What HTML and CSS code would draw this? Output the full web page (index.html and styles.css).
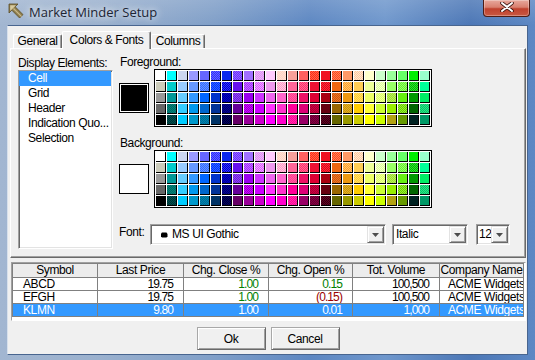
FILE: index.html
```html
<!DOCTYPE html>
<html>
<head>
<meta charset="utf-8">
<title>Market Minder Setup</title>
<link rel="stylesheet" href="styles.css">
</head>
<body>
<div class="window">
  <div class="titlebar">
    <svg class="app-icon" viewBox="0 0 16 16" width="16" height="16">
      <path d="M1 1 L10 1 L7.2 3.8 L15 11.6 L11.6 15 L3.8 7.2 L1 10 Z" fill="#8e7d4c" stroke="#5b4d27" stroke-width="0.8" stroke-linejoin="round"/>
      <path d="M2.2 2.2 L8 2.2 L2.2 8 Z" fill="#d8cba0"/>
      <path d="M5.5 5.5 L13.6 13.6" stroke="#c9b98a" stroke-width="1.2"/>
    </svg>
    <span class="title">Market Minder Setup</span>
    <div class="close-btn">
      <svg viewBox="0 0 14 10" width="14" height="10">
        <path d="M2 1 L12 9 M12 1 L2 9" stroke="#3a1410" stroke-width="3.6" stroke-linecap="round"/>
        <path d="M2 1 L12 9 M12 1 L2 9" stroke="#ffffff" stroke-width="2" stroke-linecap="round"/>
      </svg>
    </div>
  </div>
  <div class="client">
    <div class="tabs">
      <div class="tab tab-general">General</div>
      <div class="tab tab-colors active">Colors &amp; Fonts</div>
      <div class="tab tab-columns">Columns</div>
    </div>
    <div class="panel">
      <div class="elements">
        <div class="label">Display Elements:</div>
        <div class="listbox">
          <div class="item selected">Cell</div>
          <div class="item">Grid</div>
          <div class="item">Header</div>
          <div class="item">Indication Quo...</div>
          <div class="item">Selection</div>
        </div>
      </div>
      <div class="settings">
        <div class="label color-label">Foreground:</div>
        <div class="color-row">
          <div class="swatch swatch-black"></div>
          <div class="palette"></div>
        </div>
        <div class="label color-label bg-label">Background:</div>
        <div class="color-row">
          <div class="swatch swatch-white"></div>
          <div class="palette"></div>
        </div>
        <div class="font-row">
          <span class="font-label">Font:</span>
          <div class="combo combo-font">
            <span class="combo-text"><svg class="font-icon" viewBox="0 0 7 6" width="7" height="6"><path d="M1 0.5 H5.5 L6.5 2 V4.5 L5.5 5.5 H1 L0 4.5 V1.5 Z" fill="#000"/></svg>MS UI Gothic</span>
            <span class="drop"><svg viewBox="0 0 7 4" width="7" height="4"><path d="M0 0 H7 L3.5 4 Z" fill="#4d4d4d"/></svg></span>
          </div>
          <div class="combo combo-style">
            <span class="combo-text">Italic</span>
            <span class="drop"><svg viewBox="0 0 7 4" width="7" height="4"><path d="M0 0 H7 L3.5 4 Z" fill="#4d4d4d"/></svg></span>
          </div>
          <div class="combo combo-size">
            <span class="combo-text">12</span>
            <span class="drop"><svg viewBox="0 0 7 4" width="7" height="4"><path d="M0 0 H7 L3.5 4 Z" fill="#4d4d4d"/></svg></span>
          </div>
        </div>
      </div>
    </div>
    <div class="grid">
      <div class="datagrid">
        <div class="row head">
          <span>Symbol</span><span>Last Price</span><span>Chg. Close %</span><span>Chg. Open %</span><span>Tot. Volume</span><span>Company Name</span>
        </div>
        <div class="row">
          <span class="sym">ABCD</span><span class="num">19.75</span><span class="num up">1.00</span><span class="num up">0.15</span><span class="num">100,500</span><span class="co">ACME Widgets</span>
        </div>
        <div class="row">
          <span class="sym">EFGH</span><span class="num">19.75</span><span class="num up">1.00</span><span class="num down">(0.15)</span><span class="num">100,500</span><span class="co">ACME Widgets</span>
        </div>
        <div class="row selected">
          <span class="sym">KLMN</span><span class="num">9.80</span><span class="num">1.00</span><span class="num">0.01</span><span class="num">1,000</span><span class="co">ACME Widgets</span>
        </div>
      </div>
    </div>
    <div class="buttons">
      <button class="btn">Ok</button>
      <button class="btn">Cancel</button>
    </div>
  </div>
</div>
<script src="palette.js"></script>
</body>
</html>
```

FILE: styles.css
```css
* { box-sizing: border-box; }
html, body { margin: 0; padding: 0; }
body {
  width: 535px; height: 360px; overflow: hidden;
  font-family: "Liberation Sans", Arial, sans-serif;
  font-size: 12px; color: #000; letter-spacing: -0.4px;
  background: #5a86c4;
}
.window {
  width: 535px; height: 360px;
  display: flex; flex-direction: column;
  padding: 0 7px 5px 7px;
  background:
    linear-gradient(180deg, rgba(255,255,255,0.15) 0, rgba(255,255,255,0) 25px),
    linear-gradient(90deg, #a2b6d1 0%, #9bb1ce 18%, #809fc8 40%, #5d87c2 58%, #6f97cc 72%, #4c77b6 88%, #5d88c4 100%);
}
.titlebar { height: 25px; flex: none; display: flex; align-items: flex-start; }
.app-icon { flex: none; margin: 3px 0 0 1px; }
.title {
  margin: 3px 0 0 5px;
  font-family: "Open Sans", "Noto Sans", sans-serif; font-size: 13px; line-height: 18px;
  letter-spacing: 0; color: #1c2534;
  text-shadow: 0 0 6px rgba(255,255,255,0.9), 0 0 12px rgba(255,255,255,0.6);
}
.close-btn {
  margin-left: auto; margin-right: -2px;
  width: 47px; height: 17px; flex: none;
  border: 1px solid #4e1c15; border-top: none; border-radius: 0 0 4px 4px;
  background: linear-gradient(180deg, #e7a89d 0%, #d9806f 45%, #c0412e 55%, #c85842 100%);
  box-shadow: inset 0 0 0 1px rgba(255,255,255,0.3);
  display: flex; align-items: center; justify-content: center; padding-bottom: 2px;
}
.client {
  flex: 1; background: #f0f0f0;
  border: 1px solid #48658f; border-left-color: #d7e0ec;
  display: flex; flex-direction: column;
  padding: 5px 1px 0 2px;
}
.tabs { height: 17px; flex: none; display: flex; align-items: flex-end; padding-left: 3px; position: relative; z-index: 1; }
.tab {
  height: 14px; text-align: center; line-height: 13px;
  border: 1px solid; border-color: #fff #696969 transparent #fff; border-bottom: none;
  box-shadow: inset -1px 0 0 #a0a0a0;
  border-radius: 2px 2px 0 0;
  background: #f0f0f0;
}
.tab-general { width: 49px; }
.tab-colors { width: 89px; }
.tab-columns { width: 54px; }
.tab.active { height: 18px; margin-bottom: -1px; padding-top: 1px; line-height: 14px; }
.panel {
  height: 210px; flex: none;
  border: 1px solid; border-color: #fff #696969 #696969 #fff;
  box-shadow: inset -1px -1px 0 #a0a0a0;
  display: flex; padding: 7px 0 0 7px;
}
.elements { width: 95px; flex: none; display: flex; flex-direction: column; }
.label { line-height: 14px; white-space: nowrap; }
.listbox {
  height: 179px; background: #fff;
  border: 1px solid; border-color: #a0a0a0 #fff #fff #a0a0a0;
  box-shadow: inset 1px 1px 0 #696969, inset -1px -1px 0 #e3e3e3;
  padding-right: 1px;
}
.item { height: 15px; line-height: 15px; padding-left: 9px; white-space: nowrap; overflow: hidden; }
.item.selected { background: #3399ff; color: #fff; }
.settings { margin-left: 6px; display: flex; flex-direction: column; }
.color-label { line-height: 13px; padding-left: 1px; }
.bg-label { margin-top: 10px; }
.color-row { display: flex; align-items: center; }
.swatch { width: 30px; height: 30px; border: 1px solid #000; margin-right: 5px; box-shadow: inset 0 0 0 1px #fff; }
.swatch-black { background: #000; }
.swatch-white { background: #fff; }
.palette {
  border: 1px solid #000; background: #fff; padding: 1px;
  display: grid; grid-template-columns: repeat(25, 10px); grid-auto-rows: 10px; gap: 1px;
  width: 278px; height: 58px;
}
.cell {
  border-right: 1px solid #000; border-bottom: 1px solid #000;
  background: repeating-conic-gradient(var(--a) 0 25%, var(--b) 0 50%) 0 0 / 2px 2px;
}
.font-row { display: flex; align-items: flex-start; margin-top: 16px; }
.font-label { width: 31px; line-height: 13px; margin-top: 2px; }
.combo {
  height: 21px; display: flex; background: #fff;
  border: 1px solid; border-color: #a0a0a0 #fff #fff #a0a0a0;
  box-shadow: inset 1px 1px 0 #696969, inset -1px -1px 0 #e3e3e3;
  padding: 1px;
}
.combo-font { width: 236px; }
.combo-style { width: 76px; margin-left: 6px; }
.combo-size { width: 34px; margin-left: 8px; }
.combo-text { flex: 1; line-height: 17px; white-space: nowrap; overflow: hidden; display: flex; align-items: center; }
.combo-font .combo-text { padding-left: 9px; }
.combo-style .combo-text { padding-left: 2px; }
.combo-size .combo-text { padding-left: 1px; }
.font-icon { margin-right: 4px; margin-top: 1px; }
.drop {
  width: 17px; height: 17px; flex: none;
  background: #f0f0f0;
  border: 1px solid; border-color: #e3e3e3 #696969 #696969 #e3e3e3;
  box-shadow: inset 1px 1px 0 #fff, inset -1px -1px 0 #a0a0a0;
  display: flex; align-items: center; justify-content: center;
}
.grid {
  margin: 4px 0 0 1px; height: 59px; flex: none;
  border: 1px solid; border-color: #a0a0a0 #fff #fff #a0a0a0;
  background: #fff; overflow: hidden;
}
.datagrid { width: 512px; border-left: 1px solid #808080; border-top: 1px solid #808080; }
.row { display: grid; grid-template-columns: 85px 86px 85px 84px 87px 84px; }
.row > span {
  height: 13px; line-height: 12px; white-space: nowrap; overflow: hidden;
  border-right: 1px solid #808080; border-bottom: 1px solid #808080;
}
.row.head > span { height: 14px; line-height: 13px; text-align: center; background: #ececec; }
.sym { padding-left: 10px; }
.num { text-align: right; padding-right: 10px; letter-spacing: -0.9px; }
.co { padding-left: 8px; }
.up { color: #008000; }
.down { color: #990000; }
.row.selected > span { background: #3399ff; color: #fff; }
.buttons { display: flex; justify-content: center; gap: 5px; margin-top: 6px; }
.btn {
  width: 69px; height: 23px; padding: 0;
  font: inherit; letter-spacing: inherit; color: #000;
  background: #f0f0f0;
  border: 1px solid; border-color: #a8a8a8 #696969 #696969 #a8a8a8;
  box-shadow: inset 1px 1px 0 #fff, inset -1px -1px 0 #a0a0a0;
}
```

FILE: palette.js
```js
(function () {
  var rows = [
    "#ffffff #00ffff #ccd6f0 #9999ff #6666ff #2b2bff/#6666ff #0a28ee #6633ff/#9966ff #a070ff #cc99ff/#ffaaee #ffccff #ffcccc/#ffe8cc #f7a09a #ff6060 #ff2020/#ff7040 #f01020 #ff4422/#ff8855 #ff9966 #ffc8a0/#ffe8d0 #ffffcc #ccffcc #99ff99 #66ff66 #00ee00 #99ffcc",
    "#ccccbb #00cccc #99ccff #6699ff #3366ff/#6699ff #0033ff/#3366ff #0000cc/#3333ff #6611ee #9933ff/#cc66ff #cc66ff/#ff99ff #ee99ee #ff99cc/#ffccdd #ff6699 #ff3366/#ff6699 #ee1133 #dd0022/#ff3333 #ee6611 #ff9933/#ffcc66 #ffcc55 #eeff99 #ddff99/#f4ffcc #99ff66 #66ee33/#99ff66 #00bb00/#33dd33 #00ff99",
    "#999999 #009999 #66ccff #3399ff #0066ff #0033cc #000099/#0000cc #6633cc/#9933ff #9900ee #cc33ff #ee66ee #ff66cc #ff3399/#ff6699 #ee1166 #dd0033 #aa0011 #cc5511/#ee7722 #ee9911 #ffcc33/#ffdd66 #eeff66 #ddff66/#eeff99 #99dd33/#bbee55 #66ee11 #009900 #00ee66",
    "#666666 #006666/#008877 #33ccff #0099ee #0066cc #003399 #000066/#000099 #660099 #9900cc/#cc00ff #cc00ff #ff33ff #ff33cc #ff0099 #dd0077 #aa0033/#cc0044 #660011 #996600 #cc9900/#ddaa33 #ffcc00 #ffff33 #ccff33 #99ee00 #66cc00/#99ee33 #006600 #00cc66/#33dd88",
    "#000000 #003333/#005050 #00ccff #0099cc #006699/#0088aa #003366 #000033/#000066 #660066 #990099 #cc00cc #ff00ff #ff00cc #ff0099/#ff33aa #990066 #660033/#880044 #330011/#660022 #666600 #999900 #cccc00 #ffff00 #ccff00 #99aa22/#cc9900 #669900 #002222 #009966"
  ];
  var palettes = document.querySelectorAll('.palette');
  for (var p = 0; p < palettes.length; p++) {
    for (var r = 0; r < rows.length; r++) {
      var cols = rows[r].split(' ');
      for (var c = 0; c < cols.length; c++) {
        var parts = cols[c].split('/');
        var d = document.createElement('div');
        d.className = 'cell';
        d.style.setProperty('--a', parts[0]);
        d.style.setProperty('--b', parts[1] || parts[0]);
        palettes[p].appendChild(d);
      }
    }
  }
})();
```
